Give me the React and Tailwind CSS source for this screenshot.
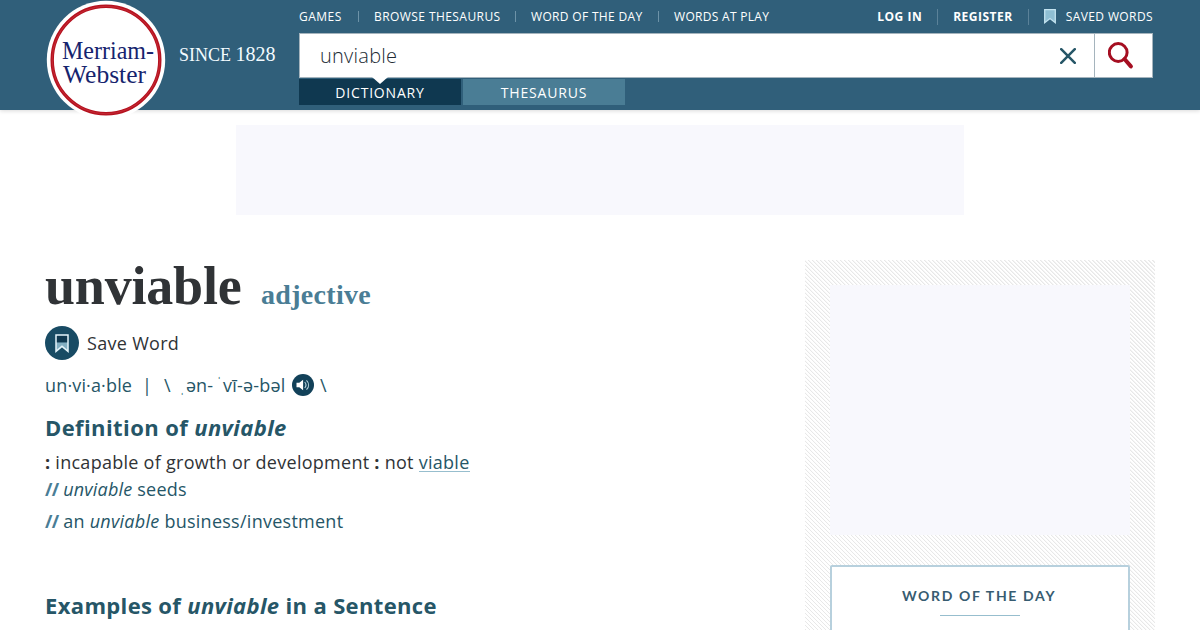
// App.jsx

const NAV_LINKS = [
    { label: "GAMES", className: "w-[44px] tracking-[0.5px]" },
    { label: "BROWSE THESAURUS", className: "w-[126px] tracking-[0.43px]" },
    { label: "WORD OF THE DAY", className: "w-[112px] tracking-[0.33px]" },
    { label: "WORDS AT PLAY", className: "w-[96px] tracking-[0.3px]" },
];

const Logo = () => (
    <svg className="w-[120px] h-[120px] shrink-0" viewBox="0 0 120 120">
        <circle cx="60" cy="60" r="59.2" fill="#fff" />
        <circle cx="60" cy="60" r="53.8" fill="none" stroke="#b5121f" strokeWidth="3.4" />
        <circle cx="60" cy="60" r="53.8" fill="none" stroke="#c9303b" strokeWidth="0.8" />
        <g fill="#16246e" fontFamily="Liberation Serif, serif">
            <text x="16" y="59" fontSize="25.5" textLength="92" lengthAdjust="spacingAndGlyphs">Merriam-</text>
            <text x="17" y="83" fontSize="25.5" textLength="83" lengthAdjust="spacingAndGlyphs">Webster</text>
        </g>
    </svg>
);

const Header = () => (
    <header className="h-[110px] bg-[#305f7a] shadow-[0_1px_4px_rgba(0,0,0,0.15)] flex pl-[46px] text-white">
        <Logo />
        <div className="w-[133px] shrink-0 pl-[13px] pt-[42px] font-['Liberation_Serif',serif] leading-6 whitespace-nowrap text-[#f3fbff]">
            <span className="text-[18px]">SINCE </span>
            <span className="text-[20px]">1828</span>
        </div>

        <div className="w-[854px]">
            <div className="h-[33px] flex items-center justify-between text-xs whitespace-nowrap">
                <nav className="flex items-center">
                    {NAV_LINKS.map((link, i) => (
                        <div key={link.label} className="flex items-center">
                            {i > 0 && <span className="w-px h-[11px] bg-[#6d93a8] mx-[15px]" />}
                            <a className={link.className}>{link.label}</a>
                        </div>
                    ))}
                </nav>
                <div className="flex items-center">
                    <a className="font-bold tracking-[0.5px]">LOG IN</a>
                    <span className="w-px h-4 bg-[#5b8299] mx-[15px]" />
                    <a className="font-bold tracking-[0.5px]">REGISTER</a>
                    <span className="w-px h-4 bg-[#5b8299] mx-[15px]" />
                    <svg className="w-3 h-[15px] mr-[10px]" viewBox="0 0 12 15">
                        <path d="M.7.7h10.6v13L6 9.6.7 13.7z" fill="#8fbfd3" stroke="#c3e3f0" strokeWidth="1.3" />
                    </svg>
                    <a className="tracking-[0.4px]">SAVED WORDS</a>
                </div>
            </div>

            {/* Search bar */}
            <div className="h-[45px] bg-white border border-[#a5b4bd] flex items-center">
                <div className="flex-1 pl-5 text-[20px] leading-6 font-light text-[#212b33] tracking-[0.25px]">unviable</div>
                <svg className="w-4 h-4 mr-[18px]" viewBox="0 0 16 16" fill="none" stroke="#265667" strokeWidth="2.5" strokeLinecap="round">
                    <path d="M1.2 1.2l13.6 13.6M14.8 1.2L1.2 14.8" />
                </svg>
                <div className="w-[58px] h-full border-l border-[#a5b4bd] pl-[13px] flex items-center">
                    <svg className="w-7 h-7" viewBox="0 0 28 28" fill="none" stroke="#a50e21">
                        <circle cx="10.2" cy="10.5" r="8.9" strokeWidth="3" />
                        <path d="M16.5 17l6.4 7.4" strokeWidth="4" strokeLinecap="round" />
                    </svg>
                </div>
            </div>

            {/* Search tabs */}
            <div className="pt-px flex gap-[2px] text-sm tracking-[0.8px] text-center leading-[27px]">
                <div className="relative w-[162px] h-[26px] bg-[#0f3850]">
                    DICTIONARY
                    <span className="absolute left-[73px] -top-[2px] border-x-[8px] border-x-transparent border-t-[7px] border-t-white" />
                </div>
                <div className="w-[162px] h-[26px] bg-[#4a7d95]">THESAURUS</div>
            </div>
        </div>
    </header>
);

const Entry = () => (
    <main className="w-[760px] text-lg text-[#303336] whitespace-nowrap">
        <div className="h-[54px] -mt-px flex items-baseline font-['Liberation_Serif',serif] font-bold leading-[54px]">
            <h1 className="w-[216px] text-[54px] tracking-[-0.2px]">unviable</h1>
            <h2 className="text-[28px] text-[#4a7d95] tracking-[0.3px]">adjective</h2>
        </div>

        <div className="mt-[13px] h-[34px] flex items-center gap-2">
            <svg className="w-[34px] h-[34px]" viewBox="0 0 34 34">
                <circle cx="17" cy="17" r="17" fill="#184b64" />
                <path d="M11 9h12v7.5H11z" fill="#0f3850" />
                <path d="M11 16.5h12V25l-6-5-6 5z" fill="#83afc2" />
                <path d="M11 9h12v16.3l-6-5-6 5z" fill="none" stroke="#e4f4fa" strokeWidth="1.5" />
            </svg>
            <span className="tracking-[0.3px]">Save Word</span>
        </div>

        <div className="mt-[12px] h-[26px] flex items-center text-[#265667]">
            <span className="w-[97px] tracking-[0.15px]">un·vi·a·ble</span>
            <span className="w-[22px]">|</span>
            <span className="w-4">\</span>
            <span className="w-[6px] text-[13px] pt-1">ˌ</span>
            <span className="w-[31px]">ən-</span>
            <span className="w-[6px] text-[13px] pb-2">ˈ</span>
            <span className="w-[69px] tracking-[0.2px]">vī-ə-bəl</span>
            <svg className="w-[22px] h-[22px] mr-[6px]" viewBox="0 0 22 22">
                <circle cx="11" cy="11" r="11" fill="#124159" />
                <path d="M4.5 8.7h2.8l3.8-3v10.6l-3.8-3H4.5z" fill="#fff" />
                <path d="M12.7 8c1.5 1.7 1.5 4.3 0 6M14.5 6.3c2.8 2.8 2.8 6.6 0 9.4" fill="none" stroke="#b9d5df" strokeWidth="1.1" />
            </svg>
            <span>\</span>
        </div>

        <h2 className="mt-[14px] text-[22px] leading-[30px] font-bold text-[#265667] tracking-[0.4px]">
            Definition of <em>unviable</em>
        </h2>
        <p className="mt-[7px] leading-[26px] tracking-[0.27px]">
            <b>:</b> incapable of growth or development <b>:</b> not{" "}
            <a className="inline-block h-[23px] leading-[26px] border-b border-[#97bece] text-[#265667]">viable</a>
        </p>
        <p className="leading-7 text-[#265667] tracking-[0.2px]">
            <b className="text-[#4a7d95] tracking-[-0.8px]">//</b> <em>unviable</em> seeds
        </p>
        <p className="mt-1 leading-7 text-[#265667] tracking-[0.26px]">
            <b className="text-[#4a7d95] tracking-[-0.8px]">//</b> an <em>unviable</em> business/investment
        </p>

        <h2 className="mt-[55px] text-[22px] leading-[30px] font-bold text-[#265667] tracking-[0.35px]">
            Examples of <em>unviable</em> in a Sentence
        </h2>
    </main>
);

const Sidebar = () => (
    <aside className="w-[350px] h-[370px] px-[25px] pt-[25px] bg-[repeating-linear-gradient(45deg,#e8e8e8_0,#e8e8e8_1px,#fff_1.4px,#fff_2.83px)]">
        <div className="h-[250px] bg-[#f8f8fd]" />
        <div className="mt-[30px] h-[80px] bg-white border-2 border-[#b7d0dd] rounded-t-xs flex flex-col items-center pt-[19px]">
            <h3 className="mr-[2px] font-['Lato',sans-serif] text-sm leading-5 font-bold tracking-[1.65px] text-[#375c71]">WORD OF THE DAY</h3>
            <div className="mt-[9px] w-20 h-px bg-[#97bece]" />
        </div>
    </aside>
);

export default function App() {
    return (
        <div className="w-[1200px] h-[630px] overflow-hidden bg-white font-['Open_Sans',sans-serif]">
            <Header />
            <div className="mt-[15px] mx-auto w-[728px] h-[90px] bg-[#f8f8fd]" />
            <div className="mt-[45px] pl-[45px] flex">
                <Entry />
                <Sidebar />
            </div>
        </div>
    );
}
